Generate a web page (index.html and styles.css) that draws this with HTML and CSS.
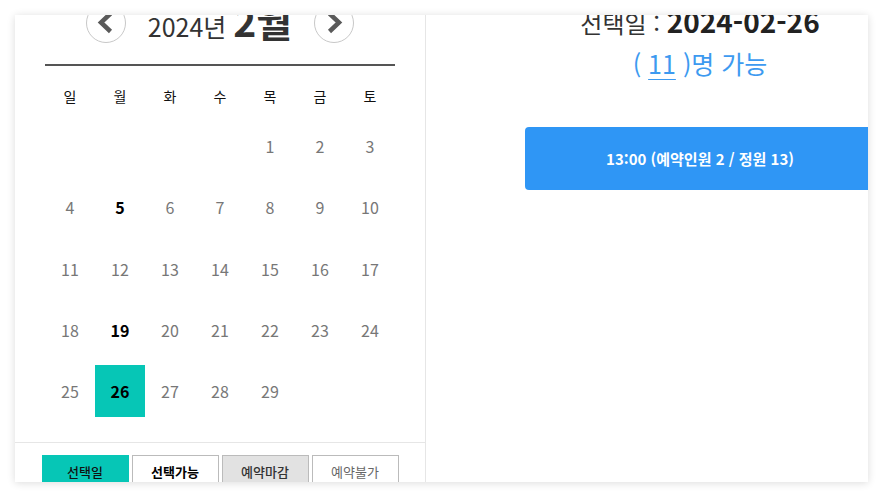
FILE: index.html
```html
<!DOCTYPE html>
<html lang="ko">
<head>
<meta charset="utf-8">
<title>예약 달력</title>
<link rel="stylesheet" href="styles.css">
</head>
<body>
<div class="card">
  <div class="inner">
    <section class="cal">
      <div class="cal-head">
        <div class="head-row">
          <button class="nav" aria-label="이전 달">
            <svg width="40" height="40" viewBox="0 0 40 40"><polyline points="24.5,10.5 15,19.5 24.5,28.5" fill="none" stroke="#5a5a5a" stroke-width="4.5"/></svg>
          </button>
          <div class="title"><span class="year">2024년</span> <span class="month">2월</span></div>
          <button class="nav" aria-label="다음 달">
            <svg width="40" height="40" viewBox="0 0 40 40"><polyline points="15.5,10.5 25,19.5 15.5,28.5" fill="none" stroke="#5a5a5a" stroke-width="4.5"/></svg>
          </button>
        </div>
      </div>
      <div class="weekdays">
        <span>일</span><span>월</span><span>화</span><span>수</span><span>목</span><span>금</span><span>토</span>
      </div>
      <div class="days">
        <span></span><span></span><span></span><span></span>
        <span>1</span><span>2</span><span>3</span>
        <span>4</span><span class="avail">5</span><span>6</span><span>7</span><span>8</span><span>9</span><span>10</span>
        <span>11</span><span>12</span><span>13</span><span>14</span><span>15</span><span>16</span><span>17</span>
        <span>18</span><span class="avail">19</span><span>20</span><span>21</span><span>22</span><span>23</span><span>24</span>
        <span>25</span><span class="avail selected">26</span><span>27</span><span>28</span><span>29</span><span></span><span></span>
      </div>
      <div class="legend">
        <span class="lg lg-sel">선택일</span>
        <span class="lg lg-avail">선택가능</span>
        <span class="lg lg-closed">예약마감</span>
        <span class="lg lg-none">예약불가</span>
      </div>
    </section>
    <section class="detail">
      <div class="sel-date"><span class="sel-label">선택일 : </span><span class="sel-value">2024-02-26</span></div>
      <div class="capacity">( <span class="num">11</span> )명 가능</div>
      <button class="slot">13:00 (예약인원 2 / 정원 13)</button>
    </section>
  </div>
</div>
</body>
</html>
```
FILE: styles.css
```css
* { box-sizing: border-box; }
html, body { margin: 0; padding: 0; background: #fff; }
body {
  font-family: "Noto Sans CJK KR", "Noto Sans", sans-serif;
  color: #333;
}
.card {
  margin: 15px;
  width: 853px;
  height: 467px;
  background: #fff;
  overflow: hidden;
  box-shadow: 0 1px 8px rgba(0,0,0,0.14);
}
.inner {
  display: flex;
  margin-top: -12px;
}
.cal {
  width: 411px;
  flex-shrink: 0;
  border-right: 1px solid #e6e6e6;
  display: flex;
  flex-direction: column;
  height: 500px;
}
.cal-head {
  margin: 0 30px;
  padding-bottom: 21px;
  border-bottom: 2px solid #555;
}
.head-row {
  display: flex;
  justify-content: center;
  align-items: center;
  gap: 22px;
  height: 40px;
}
.nav {
  width: 40px;
  height: 40px;
  border-radius: 50%;
  border: 1px solid #c8c8c8;
  background: #fff;
  padding: 0;
  display: flex;
  align-items: center;
  justify-content: center;
}
.nav svg { display: block; margin: -1px; }
.title {
  line-height: 40px;
  font-size: 25px;
  color: #333;
  padding-top: 3px;
  white-space: nowrap;
}
.month {
  font-size: 39px;
  font-weight: 700;
  line-height: 34px;
}
.weekdays {
  display: grid;
  grid-template-columns: repeat(7, 50px);
  margin: 15px 30px 0;
  height: 30px;
  align-items: center;
  font-size: 14px;
  color: #111;
}
.weekdays span { text-align: center; }
.days {
  display: grid;
  grid-template-columns: repeat(7, 50px);
  grid-auto-rows: 52px;
  row-gap: 9.25px;
  margin: 9px 30px 0;
  padding-bottom: 25px;
  font-size: 16px;
  color: #777;
}
.days span {
  display: flex;
  align-items: center;
  justify-content: center;
}
.days .avail { color: #000; font-weight: 700; }
.days .selected { background: #06c6b6; }
.legend {
  border-top: 1px solid #e6e6e6;
  padding-top: 12px;
  display: flex;
  justify-content: center;
  gap: 3px;
}
.lg {
  width: 87px;
  height: 33px;
  display: flex;
  align-items: center;
  justify-content: center;
  font-size: 13px;
  border: 1px solid #bbb;
  background: #fff;
}
.lg-sel { background: #06c6b6; border-color: #06c6b6; color: #111; font-weight: 500; }
.lg-avail { color: #000; font-weight: 700; }
.lg-closed { background: #e2e2e2; color: #333; font-weight: 500; }
.lg-none { color: #666; }
.detail {
  width: 548px;
  flex-shrink: 0;
  text-align: center;
  display: flex;
  flex-direction: column;
  align-items: center;
}
.sel-date {
  margin-top: -2px;
  height: 40px;
  line-height: 40px;
  font-size: 28px;
  color: #222;
  white-space: nowrap;
}
.sel-label { font-size: 24px; line-height: 1; color: #333; }
.sel-value { font-weight: 600; line-height: 1; }
.capacity {
  margin-top: 5px;
  height: 34px;
  line-height: 34px;
  font-size: 25px;
  color: #3d9af0;
  white-space: nowrap;
}
.capacity .num { text-decoration: underline; text-underline-offset: 5px; text-decoration-thickness: 1px; }
.slot {
  margin-top: 47px;
  width: 350px;
  height: 63px;
  border: 0;
  border-radius: 4px;
  background: #2f96f5;
  color: #fff;
  font-family: inherit;
  font-size: 15px;
  font-weight: 700;
}
```
